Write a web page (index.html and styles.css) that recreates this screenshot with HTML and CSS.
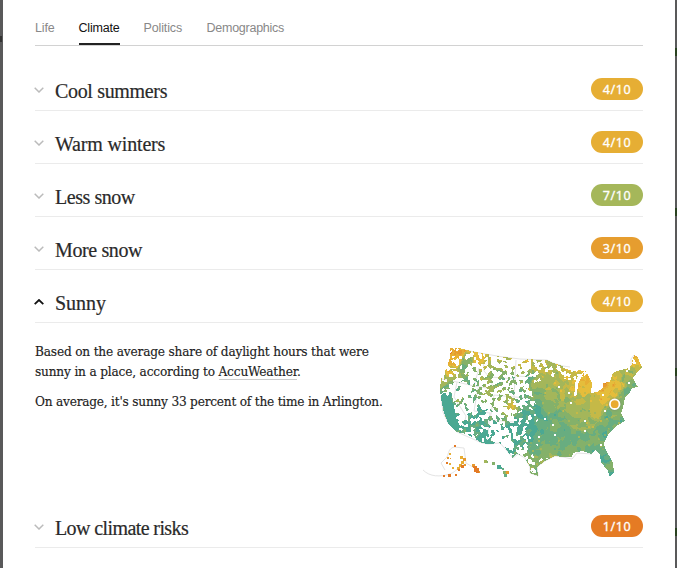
FILE: index.html
```html
<!DOCTYPE html>
<html lang="en">
<head>
<meta charset="utf-8">
<title>Climate</title>
<link rel="stylesheet" href="styles.css">
</head>
<body>
<div class="backdrop">
<main class="panel">
  <nav class="tabs">
    <a class="tab life">Life</a>
    <a class="tab climate active">Climate</a>
    <a class="tab politics">Politics</a>
    <a class="tab demographics">Demographics</a>
  </nav>
  <section class="row"><svg class="chevron" viewBox="0 0 10 6"><path d="M.7.8 5 5 9.3.8"/></svg><h2 class="cool">Cool summers</h2><span class="score amber">4/10</span></section>
  <section class="row"><svg class="chevron" viewBox="0 0 10 6"><path d="M.7.8 5 5 9.3.8"/></svg><h2 class="warm">Warm winters</h2><span class="score amber">4/10</span></section>
  <section class="row"><svg class="chevron" viewBox="0 0 10 6"><path d="M.7.8 5 5 9.3.8"/></svg><h2 class="less">Less snow</h2><span class="score green">7/10</span></section>
  <section class="row"><svg class="chevron" viewBox="0 0 10 6"><path d="M.7.8 5 5 9.3.8"/></svg><h2 class="more">More snow</h2><span class="score orange">3/10</span></section>
  <section class="row"><svg class="chevron open" viewBox="0 0 10 6"><path d="M.7 5.2 5 1 9.3 5.2"/></svg><h2 class="sunny">Sunny</h2><span class="score amber">4/10</span></section>
  <div class="detail">
    <div class="copy">
      <p>Based on the average share of daylight hours that were<br>sunny in a place, according to <a class="source">AccuWeather</a>.</p>
      <p class="average">On average, it's sunny 33 percent of the time in Arlington.</p>
    </div>
    <svg class="map" viewBox="420 340 226 142">
      <g class="borders">
        <path d="M459 349 480 353 500 356.5 520 359 547 360 553 363 563 366 570 367"/>
        <path d="M631 367V359L634 355"/>
        <path d="M442 379 457 382 474 386 479 368M457 382 454 397 466 416M478 388 474 411M474 386 493 389M483 356 484 371 491 379 493 389M516 360 514 397 494 395 490 420 526 423M491 377 516 379M474 411 490 413 487 441M466 416 463 430M514 397 530 398M516 376 534 377M441 396 443 412 448 423 457 432 482 443 488 444"/>
        <path d="M488 444 500 443 508 452 513 458 518 454 525 458 530 467 530 473 538 476 537 467 545 461 555 456 563 457 572 459 577 453 592 454"/>
        <path d="M454 447C448 449 449 453 447 457L441 463 445 470M454 447 464 448 466 463C471 466 475 468 479 471M466 464C460 465 456 472 450 474 440 477 430 477 423 470"/>
      </g>
      <g id="places" shape-rendering="crispEdges"></g>
      <circle class="marker" cx="614.7" cy="404.2" r="4.8"/>
    </svg>
  </div>
  <section class="row"><svg class="chevron" viewBox="0 0 10 6"><path d="M.7.8 5 5 9.3.8"/></svg><h2 class="risks">Low climate risks</h2><span class="score rust">1/10</span></section>
</main>
</div>
<script src="map.js"></script>
</body>
</html>
```
FILE: styles.css
```css
* { box-sizing: border-box; }
body { margin: 0; background: #fff; color: #222; overflow: hidden; }
.backdrop {
  width: 677px;
  height: 568px;
  padding: 0 2px 0 3px;
  background:
    linear-gradient(#333, #333) 0 36px / 2px 6px no-repeat,
    linear-gradient(transparent 48px, #29421f 48px, #29421f 56px, transparent 56px) 675px 0 / 2px 160px repeat-y,
    #59595a;
}
.panel { height: 568px; padding: 0 32px; background: #fff; overflow: hidden; }
.tabs {
  display: flex;
  height: 46px;
  padding-top: 18px;
  border-bottom: 1px solid #d2d2d2;
  font: 12.5px/20px "Liberation Sans", Arial, sans-serif;
  color: #888;
}
.tab { height: 27px; margin-right: 24px; white-space: nowrap; }
.life { width: 19.5px; letter-spacing: -.15px; }
.climate { width: 41px; letter-spacing: -.2px; }
.politics { width: 39px; letter-spacing: -.12px; }
.demographics { letter-spacing: -.25px; }
.active { color: #121212; border-bottom: 2px solid #222; }
.row {
  display: flex;
  align-items: flex-end;
  height: 53px;
  border-bottom: 1px solid #ebebeb;
}
.tabs + .row { margin-top: 12px; }
.chevron { width: 10px; height: 6px; margin: 0 10px 17px -1px; fill: none; stroke: #bbb; stroke-width: 1.5; }
.chevron.open { stroke: #121212; stroke-width: 1.8; }
h2 { flex: 1; margin: 0 0 6px 1px; font: 400 20px/26px "Liberation Serif", "Times New Roman", serif; color: #2a2a2a; -webkit-text-stroke: .2px #2a2a2a; }
.cool { letter-spacing: -.33px; }
.warm { letter-spacing: -.17px; }
.less { letter-spacing: -.45px; }
.more { letter-spacing: -.38px; }
.risks { letter-spacing: -.6px; }
.score {
  width: 52px;
  height: 22px;
  margin-bottom: 10px;
  border-radius: 11px;
  font: 400 12.5px/23px "Noto Sans", sans-serif;
  letter-spacing: .6px;
  text-align: center;
  color: #fff;
  -webkit-text-stroke: .3px #fff;
}
.amber { background: #e6ae34; }
.green { background: #a5b75a; }
.orange { background: #e69d2f; }
.rust { background: #e57b24; }
.detail { display: flex; justify-content: space-between; height: 172px; padding-top: 17px; }
.copy { padding-top: 1px; font: 13.5px/20px "DejaVu Serif Condensed", "DejaVu Serif", serif; letter-spacing: -.17px; white-space: nowrap; -webkit-text-stroke: .15px #222; }
.copy p { margin: 0 0 10px; }
.copy .average { letter-spacing: -.21px; }
.source { border-bottom: 1px solid #ccc; }
.map { width: 226px; height: 142px; margin-right: -3px; flex: none; }
.borders { fill: none; stroke: #e4e4e4; stroke-width: 1; }
.marker { fill: #e9ab30; stroke: #fff; stroke-width: 1.8; filter: drop-shadow(0 0 1px #6668); }
```
FILE: map.js
```js
const palette = ["#4ba893", "#68ad80", "#84b16a", "#a4b65a", "#c5b947", "#e5bd3b", "#e6ae34", "#e69a30", "#e37a25"];
const coast = [[450,348],[459,348],[480,353],[500,356.5],[520,359],[547,360],[553,363],[563,366],[566,369],[573,371],[580,370],[585,372],[578,376],[575,383],[575,395],[577,395],[578,384],[581,378],[585,370],[589,377],[592,383],[591,393],[597,392],[603,388],[603,383],[610,382],[613,373],[617,371],[625,369],[630,368],[634,355],[638,357],[640,363],[643,367],[636,374],[633,378],[636,384],[638,387],[632,388],[630,392],[625,398],[623,408],[621,413],[625,421],[618,425],[608,435],[604,443],[605,448],[613,463],[614,473],[610,477],[608,471],[601,462],[600,455],[596,450],[592,454],[583,451],[573,453],[572,457],[563,457],[555,456],[545,461],[537,467],[538,476],[530,473],[530,467],[525,458],[518,454],[512,458],[508,452],[500,443],[488,444],[482,443],[467,434],[457,432],[448,423],[444,413],[441,398],[440,390],[441,378],[447,368],[450,357]];

// x, y, share of cells filled, palette position
const samples = [
  [454,353,.95,6.2],[450,362,.95,6],[449,371,.8,4.6],[442,383,.65,4],[444,377,.6,3.5],[456,360,.25,5.8],[452,370,.25,4],
  [459,352,.8,6],[466,360,.7,2],[464,367,.55,1],[472,371,.35,3],[479,359,.6,5],[483,366,.45,3.5],[490,368,.4,3],[497,365,.35,3],
  [507,364,.35,3],[518,361,.35,4],[525,362,.4,4],[534,366,.5,3.5],[541,370,.75,3.3],[549,369,.6,3.5],[556,371,.55,4],[567,374,.65,4.5],
  [573,376,.7,4.5],[444,397,.97,0],[448,398,.95,0],[446,404,.97,0],[448,408,.97,0],[450,413,.97,0],[452,419,.97,0],[456,425,.92,0],[459,430,.92,0],[446,388,.6,1],[455,392,.18,1],[458,398,.3,3],
  [460,410,.06,1],[462,418,.15,0],[465,401,.1,1],[465,390,.1,1],[472,382,.25,1],[480,388,.35,2],[488,385,.45,3],[487,392,.45,3],[486,400,.5,1.5],[483,408,.45,0],
  [493,375,.35,2.5],[502,382,.25,1.5],[513,378,.3,2],[520,374,.35,2.3],[530,376,.4,1],[517,387,.35,1.7],[501,397,.35,2.5],
  [504,404,.55,2.5],[510,405,.5,4.6],[497,405,.3,3],[495,413,.3,1],[470,418,.45,0],[472,425,.5,0],[480,425,.7,0],
  [482,435,.9,0],[479,431,.8,0],[485,440,.8,0],[486,415,.35,0],[494,425,.3,0],[500,418,.4,1],[505,411,.35,3],[506,430,.3,0],[496,437,.3,0],[508,443,.2,0],[514,426,.4,0],
  [520,400,.45,1],[527,404,.7,.8],[524,416,.75,0],[530,420,.87,0],[522,430,.7,.2],[517,435,.7,.8],[518,443,.65,.5],[527,440,.82,.3],
  [521,451,.5,1.5],[530,455,.75,2],[534,466,.75,2.5],[536,471,.7,1.5],[537,455,.95,2],[535,380,.6,2.8],[539,383,.99,3],[538,398,.99,1.5],[537,412,.97,.3],
  [533,430,.9,0],[540,425,.97,.5],[540,440,.97,1.2],[548,438,.97,1.2],[552,450,.98,2],[545,448,.98,1.8],[548,383,.99,3],[553,393,.99,2.8],
  [548,405,.98,1.8],[555,418,.98,1.5],[561,430,.98,1.2],[565,442,.98,1.7],[560,453,.98,2],[562,382,.98,3.7],[565,395,.99,3],[571,385,.98,4.1],
  [570,405,.99,2.7],[575,398,.99,3.2],[580,383,.98,5.7],[585,389,.98,4.7],[590,398,.99,3.4],[582,413,.99,3],[580,423,.99,2.3],
  [577,436,.98,1.3],[580,447,.98,1.5],[589,438,.98,1.4],[589,423,.99,2.7],[596,413,.99,4],[597,402,.99,3.9],[602,397,.99,4.8],
  [607,390,.99,5.4],[604,385,1,7],[612,384,1,5],[617,377,.98,4.6],[627,372,.98,3],[625,379,.98,2],[620,386,1,4.7],[614,394,1,4.2],
  [619,397,1,2],[627,389,1,1.4],[618,409,.99,2],[612,413,.99,2],[605,419,.99,1.7],[600,430,.99,1],[609,427,.99,.9],[617,422,.99,1.2],
  [604,440,.99,1],[599,450,.99,1],[605,457,.98,.7],[610,466,.98,1.7],[611,475,.98,.2],[636,361,.7,5.4],[638,368,.95,4],[632,372,.95,3],[636,386,.9,2]
];

const hash = (x, y) => {
  let h = Math.imul(x | 0, 374761393) + Math.imul(y | 0, 668265263);
  h = Math.imul(h ^ (h >>> 13), 1274126177);
  return ((h ^ (h >>> 16)) >>> 0) / 4294967296;
};

function inside(x, y) {
  let hit = false;
  for (let i = 0, j = coast.length - 1; i < coast.length; j = i++) {
    const [ax, ay] = coast[i], [bx, by] = coast[j];
    if ((ay > y) !== (by > y) && x < (bx - ax) * (y - ay) / (by - ay) + ax) hit = !hit;
  }
  return hit;
}

function field(x, y) {
  let total = 0, density = 0, tone = 0;
  for (const [sx, sy, d, t] of samples) {
    const w = 1 / Math.pow((x - sx) ** 2 + (y - sy) ** 2 + 2, 2);
    total += w; density += w * d; tone += w * t;
  }
  return [density / total, tone / total];
}

// Nearest jittered seed, which gives irregular county-like patches
function patch(x, y, size) {
  const cx = Math.floor(x / size), cy = Math.floor(y / size);
  let best = Infinity, value = 0;
  for (let i = cx - 1; i <= cx + 1; i++) for (let j = cy - 1; j <= cy + 1; j++) {
    const dx = (i + hash(i, j + 91)) * size - x, dy = (j + hash(i + 57, j)) * size - y;
    if (dx * dx + dy * dy < best) { best = dx * dx + dy * dy; value = hash(i + 13, j + 29); }
  }
  return value;
}

const paths = palette.map(() => "");
const dot = (x, y, c, w = 1, h = w) => { paths[c] += `M${x} ${y}h${w}v${h}h-${w}z`; };

for (let y = 346; y < 480; y++) for (let x = 438; x < 646; x++) {
  if (!inside(x + .5, y + .5)) continue;
  const [density, tone] = field(x, y);
  const gx = Math.floor(x / 2), gy = Math.floor(y / 2);
  const noise = density > .93 ? hash(gx, gy) : patch(x, y, 2.9);
  if (noise > (density > .93 ? Math.max(density, .985) : density)) continue;
  const n = patch(x, y, 5), m = hash(gx + 300, gy);
  const c = tone + (n - .5) * 1.5 + (m > .98 ? 1.3 : m < .015 ? -1 : 0);
  dot(x, y, Math.max(0, Math.min(8, Math.round(c))));
}

// Alaska and Hawaii
for (const d of [
  [454,445,8,2],[449,453,6,2],[447,457,7,2],[450,458,7,1],[446,462,8,2],[449,463,6,2],[452,467,6,2],[460,456,6,3],[463,458,7,3],
  [461,461,6,3],[459,464,6,3],[457,467,6,3],[461,465,8,3],[464,464,7,2],[458,469,8,2],[455,474,8,2],[448,474,8,3],[443,475,8,2],
  [472,464,7,3],[474,466,8,3],[474,469,8,3],[476,470,8,3],[478,471,7,2],[473,466,8,2],[477,468,8,2],
  [484,460,3,3],[486,461,2,2],[492,462,2,3],[493,463,1,2],[497,465,0,4],[500,467,0,2],[502,468,1,2],[503,471,2,3],[506,471,7,3],[504,474,1,3],[505,472,3,2]
]) dot(d[0], d[1], d[2], d[3]);

document.getElementById("places").innerHTML = paths.map((d, i) => `<path fill="${palette[i]}" d="${d}"/>`).join("");
```
